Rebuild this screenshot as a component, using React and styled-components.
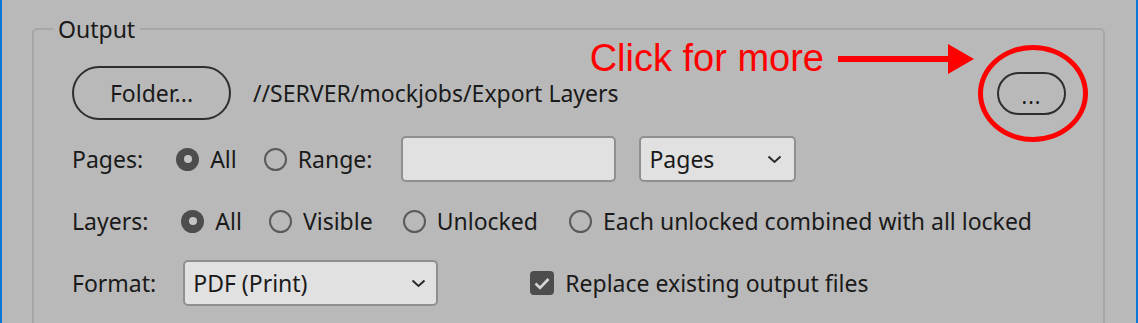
import styled, { createGlobalStyle } from "styled-components";

const GlobalStyle = createGlobalStyle`
  html, body {
    margin: 0;
    padding: 0;
    background: #b9b9b9;
  }
  body {
    font-family: "Noto Sans", "Open Sans", sans-serif;
    color: #1a1a1a;
  }
`;

const Window = styled.div`
  box-sizing: border-box;
  height: 323px;
  padding: 18px 31px 0 30px;
  background: #b9b9b9;
  border-left: 2px solid #0b78d8;
  border-right: 2px solid #0b78d8;
  overflow: hidden;
`;

const Group = styled.fieldset`
  margin: 0;
  padding: 0;
  border: 2px solid #a7a7a7;
  border-radius: 5px;
  min-inline-size: 0;
`;

const Legend = styled.legend`
  margin-left: 19px;
  padding: 0 5px;
  font-size: 23px;
  line-height: 22px;
`;

const Body = styled.div`
  display: flex;
  flex-direction: column;
  gap: 16px;
  padding: 26px 37px 40px 38px;
  font-size: 23px;
`;

const Row = styled.div`
  display: flex;
  align-items: center;
  height: ${(p) => p.$h || 46}px;
`;

const PillButton = styled.button`
  box-sizing: border-box;
  width: ${(p) => p.$w}px;
  height: ${(p) => p.$h}px;
  border: 2px solid #2e2e2e;
  border-radius: 999px;
  background: transparent;
  color: #1a1a1a;
  font: inherit;
  font-size: 23px;
  padding: 0;
  ${(p) => p.$dots && "padding-top: 6px; letter-spacing: 1px; font-size: 21px;"}
`;

const PathText = styled.span`
  margin-left: 22px;
`;

const MoreWrap = styled.div`
  position: relative;
  margin-left: auto;
  display: flex;
`;

const Ring = styled.div`
  position: absolute;
  left: -19px;
  top: -27px;
  width: 110px;
  height: 97px;
  box-sizing: border-box;
  border: 5px solid #ff0000;
  border-radius: 50%;
  pointer-events: none;
`;

const Callout = styled.div`
  position: absolute;
  right: calc(100% + 23px);
  top: -28px;
  height: 30px;
  display: flex;
  align-items: center;
  gap: 14px;
  white-space: nowrap;
  font-family: "Liberation Sans", Arial, sans-serif;
  font-size: 38px;
  color: #ff0000;
`;

const Label = styled.span`
  margin-right: ${(p) => p.$gap}px;
`;

const Option = styled.label`
  display: flex;
  align-items: center;
  gap: 11px;
  margin-right: ${(p) => p.$gap || 0}px;
`;

const Radio = styled.span`
  box-sizing: border-box;
  width: 23px;
  height: 23px;
  border-radius: 50%;
  flex: none;
  position: relative;
  border: ${(p) => (p.$on ? "none" : "2px solid #5a5a5a")};
  background: ${(p) => (p.$on ? "#4d4d4d" : "transparent")};
  &::after {
    content: "";
    display: ${(p) => (p.$on ? "block" : "none")};
    position: absolute;
    left: 7.5px;
    top: 7.5px;
    width: 8px;
    height: 8px;
    border-radius: 50%;
    background: #c4c4c4;
  }
`;

const Field = styled.div`
  box-sizing: border-box;
  width: ${(p) => p.$w}px;
  height: 46px;
  background: #e1e1e1;
  border: 2px solid #8f8f8f;
  border-radius: 5px;
  margin-right: ${(p) => p.$gap || 0}px;
`;

const Select = styled.div`
  box-sizing: border-box;
  width: ${(p) => p.$w}px;
  height: 46px;
  display: flex;
  align-items: center;
  justify-content: space-between;
  padding: 0 ${(p) => p.$pr}px 0 8px;
  background: #e1e1e1;
  border: 2px solid #8f8f8f;
  border-radius: 5px;
  margin-right: ${(p) => p.$gap || 0}px;
`;

const Check = styled.span`
  width: 24px;
  height: 24px;
  border-radius: 4px;
  background: #4d4d4d;
  display: flex;
  align-items: center;
  justify-content: center;
  flex: none;
`;

const Chevron = () => (
  <svg width="15" height="9" viewBox="0 0 15 9">
    <path d="M1.5 1.5 L7.5 7 L13.5 1.5" fill="none" stroke="#2a2a2a" strokeWidth="2" />
  </svg>
);

const Arrow = () => (
  <svg width="136" height="30" viewBox="0 0 136 30">
    <rect x="0" y="12" width="112" height="6" fill="#ff0000" />
    <polygon points="110,0 136,15 110,30" fill="#ff0000" />
  </svg>
);

export default function App() {
  return (
    <>
      <GlobalStyle />
      <Window>
        <Group>
          <Legend>Output</Legend>
          <Body>
            <Row $h={54}>
              <PillButton $w={159} $h={54}>Folder...</PillButton>
              <PathText>//SERVER/mockjobs/Export Layers</PathText>
              <MoreWrap>
                <Callout>
                  <span>Click for more</span>
                  <Arrow />
                </Callout>
                <PillButton $w={69} $h={43} $dots>...</PillButton>
                <Ring />
              </MoreWrap>
            </Row>
            <Row>
              <Label $gap={33}>Pages:</Label>
              <Option $gap={27}>
                <Radio $on />
                All
              </Option>
              <Option $gap={29}>
                <Radio />
                Range:
              </Option>
              <Field $w={215} $gap={23} />
              <Select $w={157} $pr={12}>
                Pages
                <Chevron />
              </Select>
            </Row>
            <Row>
              <Label $gap={33}>Layers:</Label>
              <Option $gap={27}>
                <Radio $on />
                All
              </Option>
              <Option $gap={30}>
                <Radio />
                Visible
              </Option>
              <Option $gap={31}>
                <Radio />
                Unlocked
              </Option>
              <Option>
                <Radio />
                Each unlocked combined with all locked
              </Option>
            </Row>
            <Row>
              <Label $gap={27}>Format:</Label>
              <Select $w={255} $pr={10} $gap={92}>
                PDF (Print)
                <Chevron />
              </Select>
              <Option>
                <Check>
                  <svg width="16" height="13" viewBox="0 0 16 13">
                    <path d="M1.5 6.5 L6 11 L14.5 2" fill="none" stroke="#d6d6d6" strokeWidth="2.6" />
                  </svg>
                </Check>
                Replace existing output files
              </Option>
            </Row>
          </Body>
        </Group>
      </Window>
    </>
  );
}
